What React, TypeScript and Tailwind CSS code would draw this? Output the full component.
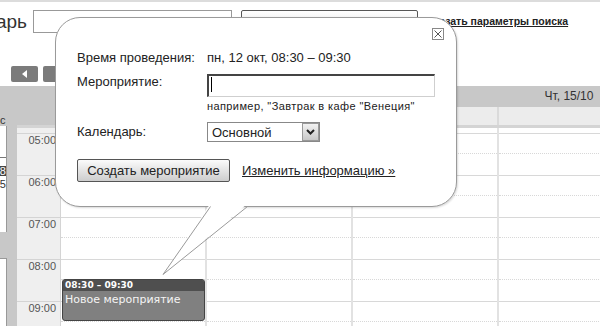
import React from 'react';

const hours = ['04:00', '05:00', '06:00', '07:00', '08:00', '09:00'];
const days = ['Пн, 12/10', 'Вт, 13/10', 'Ср, 14/10', 'Чт, 15/10'];

function DayColumn({ children }: { children?: React.ReactNode }) {
  return (
    <div className="relative w-[146px] shrink-0 border-r-2 border-[#e2e2e2]">
      {hours.map((h) => (
        <div key={h} className="h-[42px] border-t border-[#d8d8d8]">
          <div className="h-[20px] border-b border-dotted border-[#d8d8d8]" />
        </div>
      ))}
      {children}
    </div>
  );
}

export default function App() {
  return (
    <div className="relative w-[600px] h-[326px] overflow-hidden bg-white font-['Liberation_Sans',Arial,sans-serif] text-[#222]">
      <div className="h-[2px] bg-[#dcdcdc]" />

      {/* top search bar */}
      <div className="flex items-center h-[23px] mt-[8px]">
        <div className="w-[27px] overflow-hidden flex justify-end">
          <span className="whitespace-nowrap text-[19px] leading-[23px] text-[#333]">Календарь</span>
        </div>
        <div className="ml-[6px] w-[199px] h-[23px] border border-[#999] bg-white" />
        <div className="ml-[9px] w-[177px] h-[23px] border border-[#555] rounded-[2px] bg-gradient-to-b from-white to-[#dedede] text-[13px] leading-[21px] pl-[11px]">
          Поиск
        </div>
        <span className="ml-[2px] text-[10.5px] font-bold underline whitespace-nowrap text-[#222]">Показать параметры поиска</span>
      </div>

      {/* nav buttons */}
      <div className="flex mt-[33px] ml-[11px] gap-[5px]">
        <div className="w-[27px] h-[16px] bg-[#7b7b7b] rounded-[2px] flex items-center justify-center">
          <svg width="6" height="8" viewBox="0 0 6 8"><polygon points="5,0 0,4 5,8" fill="#fff" /></svg>
        </div>
        <div className="w-[27px] h-[16px] bg-[#7b7b7b] rounded-[2px] flex items-center justify-center">
          <svg width="6" height="8" viewBox="0 0 6 8"><polygon points="1,0 6,4 1,8" fill="#fff" /></svg>
        </div>
      </div>

      {/* calendar */}
      <div className="flex mt-[4px] h-[240px]">
        {/* left sidebar */}
        <div className="w-[17px] shrink-0 bg-[#c8c8c8] flex flex-col">
          <div className="mt-[28px] text-[11px] leading-[13px] text-[#333] h-[12px]">с</div>
          <div className="w-[7px] h-[106px] bg-white border-r border-[#999] overflow-hidden flex flex-col text-[11px] text-[#333]">
            <div className="h-[32px] shrink-0 border-b border-[#777]" />
            <div className="h-[8px] shrink-0" />
            <div className="h-[10px] flex items-center justify-end whitespace-nowrap bg-[#444] text-white leading-[10px]">18</div>
            <div className="flex justify-end whitespace-nowrap mt-[2px] leading-[12px]">25</div>
          </div>
          <div className="mt-[26px] w-[7px] flex-1 bg-white border-r border-t border-[#999]" />
        </div>

        <div className="flex-1 flex flex-col min-w-0">
          {/* header */}
          <div className="h-[21px] flex bg-[#c8c8c8] shrink-0">
            <div className="w-[44px] shrink-0" />
            {days.map((d) => (
              <div key={d} className="w-[146px] shrink-0 text-center text-[12px] leading-[21px] text-[#333] pr-[6px]">{d}</div>
            ))}
          </div>
          {/* all-day row */}
          <div className="h-[21px] flex shrink-0 border-b-[3px] border-[#d4d4d4]">
            <div className="w-[44px] shrink-0 bg-[#c8c8c8]" />
            {days.map((d) => (
              <div key={d} className="w-[146px] shrink-0 bg-[#ececec] border-r-2 border-[#dadada]" />
            ))}
          </div>
          {/* grid */}
          <div className="flex-1 overflow-hidden">
            <div className="flex -mt-[37px]">
              <div className="w-[44px] shrink-0 bg-[#efefef] border-r border-[#d4d4d4]">
                {hours.map((h) => (
                  <div key={h} className="h-[42px] border-t border-[#d4d4d4] text-right pr-[4px] text-[11px] leading-[13px] text-[#555]">
                    {h}
                  </div>
                ))}
              </div>
              <DayColumn>
                <div className="absolute left-[1px] top-[188px] w-[143px] h-[42px] rounded-[3px] border border-[#444] bg-[#808080] overflow-hidden font-['DejaVu_Sans',sans-serif]">
                  <div className="h-[11px] bg-[#4f4f4f] text-white text-[9px] font-bold leading-[11px] pl-[2px]">08:30 – 09:30</div>
                  <div className="text-[#f4f4f4] text-[11px] leading-[14px] pl-[2px] pt-[2px]">Новое мероприятие</div>
                </div>
              </DayColumn>
              <DayColumn />
              <DayColumn />
              <DayColumn />
            </div>
          </div>
        </div>
      </div>

      {/* popup bubble */}
      <div className="absolute left-[55px] top-[17px] w-[402px] h-[190px] rounded-[25px] border border-[#9a9a9a] bg-white shadow-[1px_1px_2px_rgba(0,0,0,0.15)] text-[13px] leading-[15px] text-[#222]">
        <div className="absolute left-[376px] top-[10px] w-[12px] h-[12px] border border-[#888] flex items-center justify-center">
          <svg width="8" height="8" viewBox="0 0 8 8"><path d="M0.5 0.5L7.5 7.5M7.5 0.5L0.5 7.5" stroke="#555" strokeWidth="1" /></svg>
        </div>
        <div className="flex flex-col pt-[32px] pl-[21px]">
          <div className="flex">
            <div className="w-[130px] shrink-0">Время проведения:</div>
            <div>пн, 12 окт, 08:30 – 09:30</div>
          </div>
          <div className="flex mt-[9px]">
            <div className="w-[130px] shrink-0">Мероприятие:</div>
            <div className="flex flex-col">
              <div className="w-[228px] h-[23px] border-t-2 border-l-2 border-r border-b border-t-[#444] border-l-[#444] border-r-[#cfcfcf] border-b-[#cfcfcf] bg-white">
                <div className="ml-[2px] mt-[1px] w-[1px] h-[15px] bg-black" />
              </div>
              <div className="mt-[3px] text-[11px] leading-[12px] text-[#222] tracking-[0.4px] whitespace-nowrap">например, "Завтрак в кафе "Венеция"</div>
            </div>
          </div>
          <div className="flex mt-[10px]">
            <div className="w-[130px] shrink-0 pt-[2px]">Календарь:</div>
            <div className="w-[113px] h-[20px] border border-[#888] bg-white flex items-center justify-between">
              <span className="pl-[4px]">Основной</span>
              <div className="w-[17px] h-[18px] border border-[#999] bg-gradient-to-b from-[#f2f2f2] to-[#c8c8c8] flex items-center justify-center">
                <svg width="9" height="6" viewBox="0 0 9 6"><path d="M1 1L4.5 4.5L8 1" stroke="#222" strokeWidth="2" fill="none" /></svg>
              </div>
            </div>
          </div>
          <div className="flex items-center mt-[17px]">
            <div className="w-[153px] h-[23px] border border-[#555] rounded-[2px] bg-gradient-to-b from-[#fbfbfb] to-[#cdcdcd] text-center leading-[21px]">
              Создать мероприятие
            </div>
            <span className="ml-[12px] underline">Изменить информацию »</span>
          </div>
        </div>
      </div>

      {/* bubble tail */}
      <svg className="absolute left-0 top-0 pointer-events-none" width="600" height="326" viewBox="0 0 600 326">
        <polygon points="210,204 163,275 247,204" fill="#fff" />
        <path d="M210.5 206.5L163 274.5L247.5 206.5" stroke="#9a9a9a" strokeWidth="1" fill="none" />
      </svg>
    </div>
  );
}
